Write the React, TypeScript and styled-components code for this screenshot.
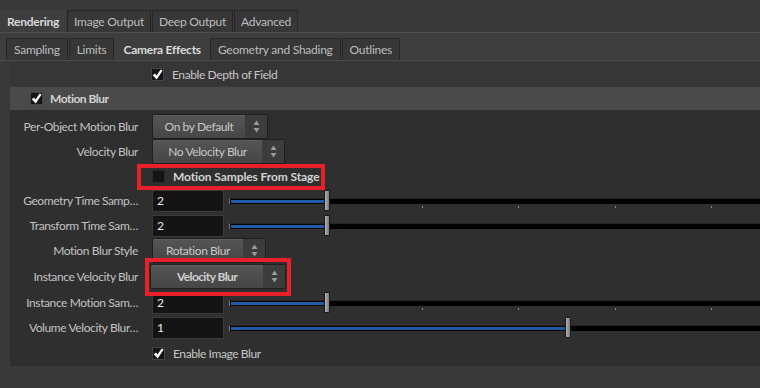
import styled, { createGlobalStyle } from "styled-components";

const GlobalStyle = createGlobalStyle`
  html, body {
    margin: 0;
    padding: 0;
    background: #393939;
  }
  * {
    box-sizing: border-box;
  }
`;

type TSlider = { label: string; value: string; fill: number; ticks?: boolean };

const TICKS = [193, 289, 386, 482];

const Check = () => (
  <svg width="13" height="13" viewBox="0 0 13 13">
    <path d="M0.8 7.4 L3.6 5.2 L5.3 7.8 L10.2 0.6 L12.6 1.8 L5.6 12.4 Z" fill="#f4f4f4" />
  </svg>
);

const Arrows = () => (
  <svg width="7" height="13" viewBox="0 0 7 13">
    <path d="M3.5 0.5 L6.5 5 L0.5 5 Z" fill="#9a9a9a" />
    <path d="M3.5 12.5 L6.5 8 L0.5 8 Z" fill="#9a9a9a" />
  </svg>
);

const Dropdown = ({ text, width, bold }: { text: string; width: number; bold?: boolean }) => (
  <MenuButton $w={width} $bold={bold}>
    <MenuText>{text}</MenuText>
    <MenuArrow>
      <Arrows />
    </MenuArrow>
  </MenuButton>
);

const SliderField = ({ s }: { s: TSlider }) => (
  <Row>
    <Label>{s.label}</Label>
    <FieldBox>
      <NumInput>{s.value}</NumInput>
      <Slider>
        <Track />
        <Fill style={{ width: s.fill }} />
        {s.ticks && TICKS.map((t) => <Tick key={t} style={{ left: t }} />)}
        <Handle style={{ left: s.fill }} />
      </Slider>
    </FieldBox>
  </Row>
);

const App = () => {
  return (
    <Page>
      <GlobalStyle />
      <TopTabs>
        <Tab $active $pad={6}>Rendering</Tab>
        <Tab $pad={6}>Image Output</Tab>
        <Tab $pad={6}>Deep Output</Tab>
        <Tab $pad={6}>Advanced</Tab>
      </TopTabs>
      <SubTabs>
        <Tab>Sampling</Tab>
        <Tab>Limits</Tab>
        <Tab $active>Camera Effects</Tab>
        <Tab>Geometry and Shading</Tab>
        <Tab>Outlines</Tab>
      </SubTabs>
      <Panel>
        <Toggle $pad={141}>
          <CheckBox>
            <Check />
          </CheckBox>
          <ToggleText>Enable Depth of Field</ToggleText>
        </Toggle>
        <SectionHeader>
          <CheckBox>
            <Check />
          </CheckBox>
          <HeaderText>Motion Blur</HeaderText>
        </SectionHeader>
        <SectionBody>
          <Row>
            <Label>Per-Object Motion Blur</Label>
            <Dropdown text="On by Default" width={116} />
          </Row>
          <Row>
            <Label>Velocity Blur</Label>
            <Dropdown text="No Velocity Blur" width={133} />
          </Row>
          <Row $h={24}>
            <span />
            <Highlight $box="-5px -5px -6px -15px">
              <CheckBox $empty />
              <ToggleText $bold>Motion Samples From Stage</ToggleText>
            </Highlight>
          </Row>
          <SliderField s={{ label: "Geometry Time Samp…", value: "2", fill: 95, ticks: true }} />
          <SliderField s={{ label: "Transform Time Sam…", value: "2", fill: 95 }} />
          <Row>
            <Label>Motion Blur Style</Label>
            <Dropdown text="Rotation Blur" width={114} />
          </Row>
          <Row $h={27}>
            <Label>Instance Velocity Blur</Label>
            <Highlight $box="-6px -5px -7px -5px" $shift={-2}>
              <BigMenu>
                <Dropdown text="Velocity Blur" width={136} bold />
              </BigMenu>
            </Highlight>
          </Row>
          <SliderField s={{ label: "Instance Motion Sam…", value: "2", fill: 95, ticks: true }} />
          <SliderField s={{ label: "Volume Velocity Blur…", value: "1", fill: 336 }} />
          <Row $h={23}>
            <span />
            <Toggle>
              <CheckBox>
                <Check />
              </CheckBox>
              <ToggleText>Enable Image Blur</ToggleText>
            </Toggle>
          </Row>
        </SectionBody>
      </Panel>
    </Page>
  );
};
export default App;

const Page = styled.div`
  width: 760px;
  height: 388px;
  overflow: hidden;
  background: #393939;
  font-family: Lato, "Open Sans", sans-serif;
  font-size: 12px;
  letter-spacing: -0.4px;
  color: #c6c6c6;
`;
const TopTabs = styled.div`
  display: flex;
  height: 33px;
  padding-top: 10px;
  border-bottom: 1px solid #4e4e4e;
`;
const SubTabs = styled.div`
  display: flex;
  height: 28px;
  padding: 5px 0 0 6px;
  background: #3e3e3e;
  border-bottom: 1px solid #4e4e4e;
`;
const Tab = styled.div<{ $active?: boolean; $pad?: number }>`
  display: flex;
  align-items: center;
  height: 22px;
  padding: 0 ${(p) => p.$pad ?? 7}px;
  margin-right: 1px;
  white-space: nowrap;
  background: ${(p) => (p.$active ? "#3e3e3e" : "#373737")};
  border: 1px solid ${(p) => (p.$active ? "transparent" : "#262626")};
  border-bottom: none;
  color: ${(p) => (p.$active ? "#dadada" : "#bdbdbd")};
  font-weight: ${(p) => (p.$active ? 700 : 400)};
  letter-spacing: -0.25px;
`;
const Panel = styled.div`
  margin-left: 10px;
  background: #363636;
  height: 304px;
`;
const Toggle = styled.div<{ $pad?: number }>`
  display: flex;
  align-items: center;
  gap: 8px;
  height: 26px;
  padding-left: ${(p) => p.$pad ?? 0}px;
`;
const CheckBox = styled.div<{ $empty?: boolean }>`
  display: flex;
  align-items: center;
  justify-content: center;
  width: 13px;
  height: 13px;
  background: #141414;
  border: 1px solid ${(p) => (p.$empty ? "#2a2a2a" : "#444")};
  flex-shrink: 0;
  overflow: visible;
`;
const ToggleText = styled.span<{ $bold?: boolean }>`
  color: ${(p) => (p.$bold ? "#d4d4d4" : "#c6c6c6")};
  font-weight: ${(p) => (p.$bold ? 700 : 400)};
  letter-spacing: ${(p) => (p.$bold ? "-0.1px" : "-0.4px")};
  white-space: nowrap;
`;
const SectionHeader = styled.div`
  display: flex;
  align-items: center;
  gap: 7px;
  height: 23px;
  padding-left: 20px;
  background: #4a4a4a;
`;
const HeaderText = styled.span`
  font-weight: 700;
  color: #d2d2d2;
  letter-spacing: -0.5px;
`;
const SectionBody = styled.div`
  background: #2f2f2f;
  padding: 4px 0 3px;
`;
const Row = styled.div<{ $h?: number }>`
  display: grid;
  grid-template-columns: 128px 1fr;
  column-gap: 14px;
  align-items: center;
  height: ${(p) => p.$h ?? 25}px;
`;
const Label = styled.div`
  text-align: right;
  white-space: nowrap;
  color: #c2c2c2;
`;
const MenuButton = styled.div<{ $w: number; $bold?: boolean }>`
  display: flex;
  width: ${(p) => p.$w}px;
  height: 100%;
  min-height: 21px;
  max-height: 25px;
  border: 1px solid #1f1f1f;
  border-radius: 2px;
  background: linear-gradient(#555555, #464646);
  box-shadow: inset 0 1px 0 #5e5e5e;
  overflow: hidden;
  font-weight: ${(p) => (p.$bold ? 700 : 400)};
  letter-spacing: ${(p) => (p.$bold ? "-0.6px" : "-0.4px")};
  color: ${(p) => (p.$bold ? "#d0d0d0" : "#c8c8c8")};
`;
const MenuText = styled.div`
  flex: 1;
  display: flex;
  align-items: center;
  justify-content: center;
  white-space: nowrap;
`;
const MenuArrow = styled.div`
  width: 22px;
  display: flex;
  align-items: center;
  justify-content: center;
  background: #3c3c3c;
`;
const BigMenu = styled.div`
  display: flex;
  height: 25px;
`;
const Highlight = styled.div<{ $box: string; $shift?: number }>`
  position: relative;
  display: inline-flex;
  align-items: center;
  gap: 8px;
  justify-self: start;
  margin-left: ${(p) => p.$shift ?? 0}px;
  &::after {
    content: "";
    position: absolute;
    inset: ${(p) => p.$box};
    border: 4px solid #e8202a;
    pointer-events: none;
  }
`;
const FieldBox = styled.div`
  display: flex;
  align-items: center;
  gap: 5px;
`;
const NumInput = styled.div`
  width: 72px;
  height: 22px;
  display: flex;
  align-items: center;
  padding-left: 4px;
  background: #141414;
  border: 1px solid #3a3a3a;
  color: #ececec;
  font-size: 12px;
`;
const Slider = styled.div`
  position: relative;
  flex: 1;
  height: 22px;
`;
const Track = styled.div`
  position: absolute;
  left: 0;
  right: 0;
  top: 8px;
  height: 6px;
  background: #000;
  border-top: 1px solid #242424;
  border-left: 1px solid #777;
`;
const Fill = styled.div`
  position: absolute;
  left: 2px;
  top: 10px;
  height: 3px;
  background: #1f5ba6;
`;
const Tick = styled.div`
  position: absolute;
  top: 16px;
  width: 1px;
  height: 2px;
  background: #8a8a8a;
`;
const Handle = styled.div`
  position: absolute;
  top: 0;
  width: 6px;
  height: 21px;
  background: linear-gradient(90deg, #b0b0b0, #7a7a7a);
  border: 1px solid #1a1a1a;
  border-radius: 1px;
`;
